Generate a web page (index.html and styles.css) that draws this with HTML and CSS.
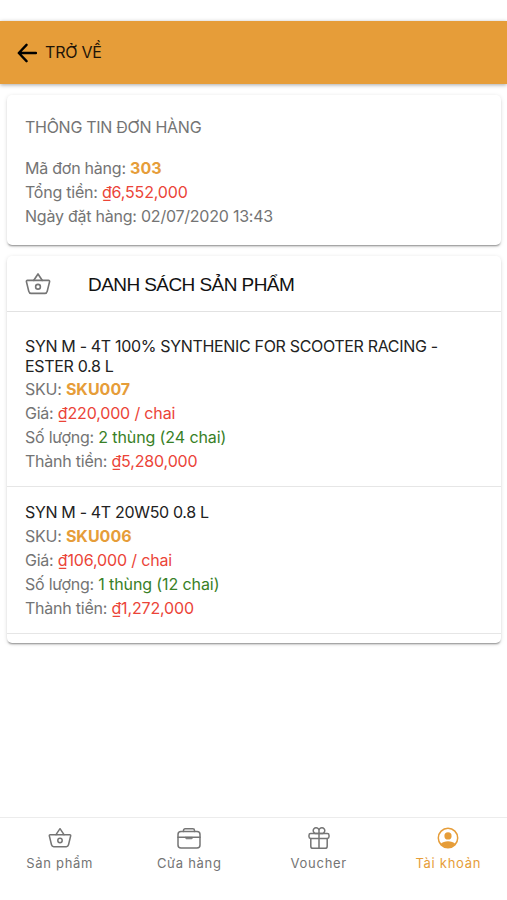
FILE: index.html
```
<!DOCTYPE html>
<html lang="vi">
<head>
    <meta charset="UTF-8">
    <meta name="viewport" content="width=device-width, initial-scale=1.0">
    <title>Thông tin đơn hàng</title>
    <link rel="stylesheet" href="styles.css">
</head>
<body>
    <svg class="sprite" width="0" height="0">
        <symbol id="basket" viewBox="0 0 24 24">
            <path d="M2.200 8.700h19.600c.6 0 1 .5.900 1.100l-2.200 9c-.3 1.200-1 1.900-2.200 1.900H5.700c-1.200 0-1.900-.7-2.200-1.900l-2.200-9C1.200 9.200 1.600 8.700 2.200 8.700z"/>
            <path d="M8 8.700l4-6L16 8.700"/>
            <circle cx="12" cy="14.500" r="2.200"/>
        </symbol>
    </svg>

    <header class="toolbar">
        <a href="#" class="back">
            <svg class="back-icon" viewBox="0 0 22 22"><path d="M10.500 2L2 11l8.500 9M2 11h19"/></svg>
            <span>TRỞ VỀ</span>
        </a>
    </header>

    <main class="content">
        <section class="card order">
            <h2 class="order-title">THÔNG TIN ĐƠN HÀNG</h2>
            <div class="line">Mã đơn hàng: <b class="code">303</b></div>
            <div class="line">Tổng tiền: <span class="price">₫6,552,000</span></div>
            <div class="line date">Ngày đặt hàng: 02/07/2020 13:43</div>
        </section>

        <section class="card products">
            <div class="list-header">
                <svg class="icon"><use href="#basket"/></svg>
                <h2>DANH SÁCH SẢN PHẨM</h2>
            </div>
            <div class="item first">
                <h3>SYN M - 4T 100% SYNTHENIC FOR SCOOTER RACING - ESTER 0.8 L</h3>
                <div class="line">SKU: <b class="code">SKU007</b></div>
                <div class="line">Giá: <span class="price">₫220,000 / chai</span></div>
                <div class="line">Số lượng: <span class="qty">2 thùng (24 chai)</span></div>
                <div class="line">Thành tiền: <span class="price">₫5,280,000</span></div>
            </div>
            <div class="item">
                <h3>SYN M - 4T 20W50 0.8 L</h3>
                <div class="line">SKU: <b class="code">SKU006</b></div>
                <div class="line">Giá: <span class="price">₫106,000 / chai</span></div>
                <div class="line">Số lượng: <span class="qty">1 thùng (12 chai)</span></div>
                <div class="line">Thành tiền: <span class="price">₫1,272,000</span></div>
            </div>
        </section>
    </main>

    <nav class="tabs">
        <a href="#" class="tab">
            <svg class="icon"><use href="#basket"/></svg>
            <span>Sản phẩm</span>
        </a>
        <a href="#" class="tab">
            <svg class="icon" viewBox="0 0 24 24">
                <rect x="1" y="5.500" width="22" height="16.500" rx="3"/>
                <path d="M6.500 5.500v-1c0-1 .7-1.700 1.700-1.700h7.600c1 0 1.700.7 1.700 1.700v1M1 11.300h22"/>
                <path class="dark" d="M8.500 11.300h7v.4c0 .7-.4 1.100-1.100 1.100H9.600c-.7 0-1.100-.4-1.100-1.100z"/>
            </svg>
            <span>Cửa hàng</span>
        </a>
        <a href="#" class="tab">
            <svg class="icon" viewBox="0 0 24 24">
                <path d="M12 4.600v2.900h2.600A2.900 2.900 0 1 0 12 4.600zM12 4.600v2.900H9.400A2.900 2.900 0 1 1 12 4.600z"/>
                <rect x="2" y="7.500" width="20" height="5" rx="1.700"/>
                <path d="M20.200 12.500v7.700c0 1.200-.9 2.100-2.100 2.100H5.900c-1.200 0-2.100-.9-2.100-2.100v-7.700M12 7.500v14.800"/>
            </svg>
            <span>Voucher</span>
        </a>
        <a href="#" class="tab active">
            <svg class="icon" viewBox="0 0 24 24">
                <circle class="ring" cx="12" cy="12" r="9.700"/>
                <circle class="solid" cx="12" cy="9.900" r="3.600"/>
                <path class="solid" d="M4.600 18c1.700-1.900 4.400-2.800 7.400-2.800s5.700.9 7.400 2.800a9.700 9.700 0 0 1-14.800 0z"/>
            </svg>
            <span>Tài khoản</span>
        </a>
    </nav>
</body>
</html>
```
FILE: styles.css
```
* {
    box-sizing: border-box;
}
body {
    display: flex;
    flex-direction: column;
    height: 100vh;
    margin: 0;
    padding-top: 21px;
    font-family: Inter, "Noto Sans", sans-serif;
    font-size: 16px;
    color: #747474;
    background-color: #fff;
    overflow: hidden;
}
h2, h3 {
    margin: 0;
    font-weight: 400;
}
a {
    color: inherit;
    text-decoration: none;
}
.sprite {
    position: absolute;
}
.toolbar {
    display: flex;
    align-items: center;
    height: 63px;
    padding-left: 17px;
    background-color: #e69d39;
    box-shadow: 0 1px 4px rgba(0, 0, 0, 0.35);
}
.back {
    display: flex;
    align-items: center;
    gap: 8px;
    letter-spacing: -0.2px;
    color: #1f1508;
}
.back span {
    padding-bottom: 1px;
}
.back-icon {
    width: 20px;
    height: 20px;
    fill: none;
    stroke: #000;
    stroke-width: 2.6;
    stroke-linecap: round;
    stroke-linejoin: round;
}
.content {
    flex: 1;
    padding: 11px 6px 0 7px;
}
.card {
    margin-bottom: 11px;
    border-radius: 5px;
    background-color: #fff;
    box-shadow: 0 2px 2px -1px rgba(0, 0, 0, 0.4), 0 1px 4px rgba(0, 0, 0, 0.13);
}
.order {
    height: 150px;
    padding: 22px 18px 0;
}
.order-title {
    margin-bottom: 19px;
    font-size: 16px;
    line-height: 20px;
    letter-spacing: -0.28px;
}
.line {
    line-height: 24px;
    letter-spacing: -0.23px;
}
.code {
    font-weight: 700;
    letter-spacing: 0;
    color: #e69d39;
}
.price {
    letter-spacing: -0.15px;
    color: #eb4438;
}
.qty {
    letter-spacing: -0.1px;
    color: #388026;
}
.products {
    padding-bottom: 9px;
}
.list-header {
    display: flex;
    align-items: center;
    height: 56px;
    padding-left: 18px;
    border-bottom: 1px solid #e2e2e2;
}
.list-header h2 {
    margin-left: 37px;
    padding-top: 2px;
    font-family: "Liberation Sans", Arial, sans-serif;
    font-size: 19px;
    letter-spacing: -0.57px;
    color: #111;
}
.item {
    padding: 16px 18px 13px;
    border-bottom: 1px solid #e6e6e6;
}
.item.first {
    padding-top: 25px;
}
.item h3 {
    margin-bottom: 1px;
    font-size: 16px;
    line-height: 19.5px;
    letter-spacing: -0.33px;
    color: #222;
}
.icon {
    width: 26px;
    height: 26px;
    fill: none;
    stroke: #757575;
    stroke-width: 1.5;
    stroke-linecap: round;
    stroke-linejoin: round;
}
.tabs {
    display: flex;
    height: 83px;
    margin: 0 -6px 0 -5px;
    border-top: 1px solid #ececec;
}
.tab {
    display: flex;
    flex: 1;
    flex-direction: column;
    align-items: center;
    padding-top: 8px;
    font-size: 13px;
    letter-spacing: 0.7px;
}
.tab .icon {
    width: 24px;
    height: 24px;
    margin-bottom: 5px;
}
.tab .dark {
    fill: #757575;
    stroke-width: 0.8;
}
.active {
    color: #e69d39;
}
.active .ring {
    stroke: #e69d39;
    stroke-width: 1.5;
}
.active .solid {
    fill: #e69d39;
    stroke: none;
}
```
